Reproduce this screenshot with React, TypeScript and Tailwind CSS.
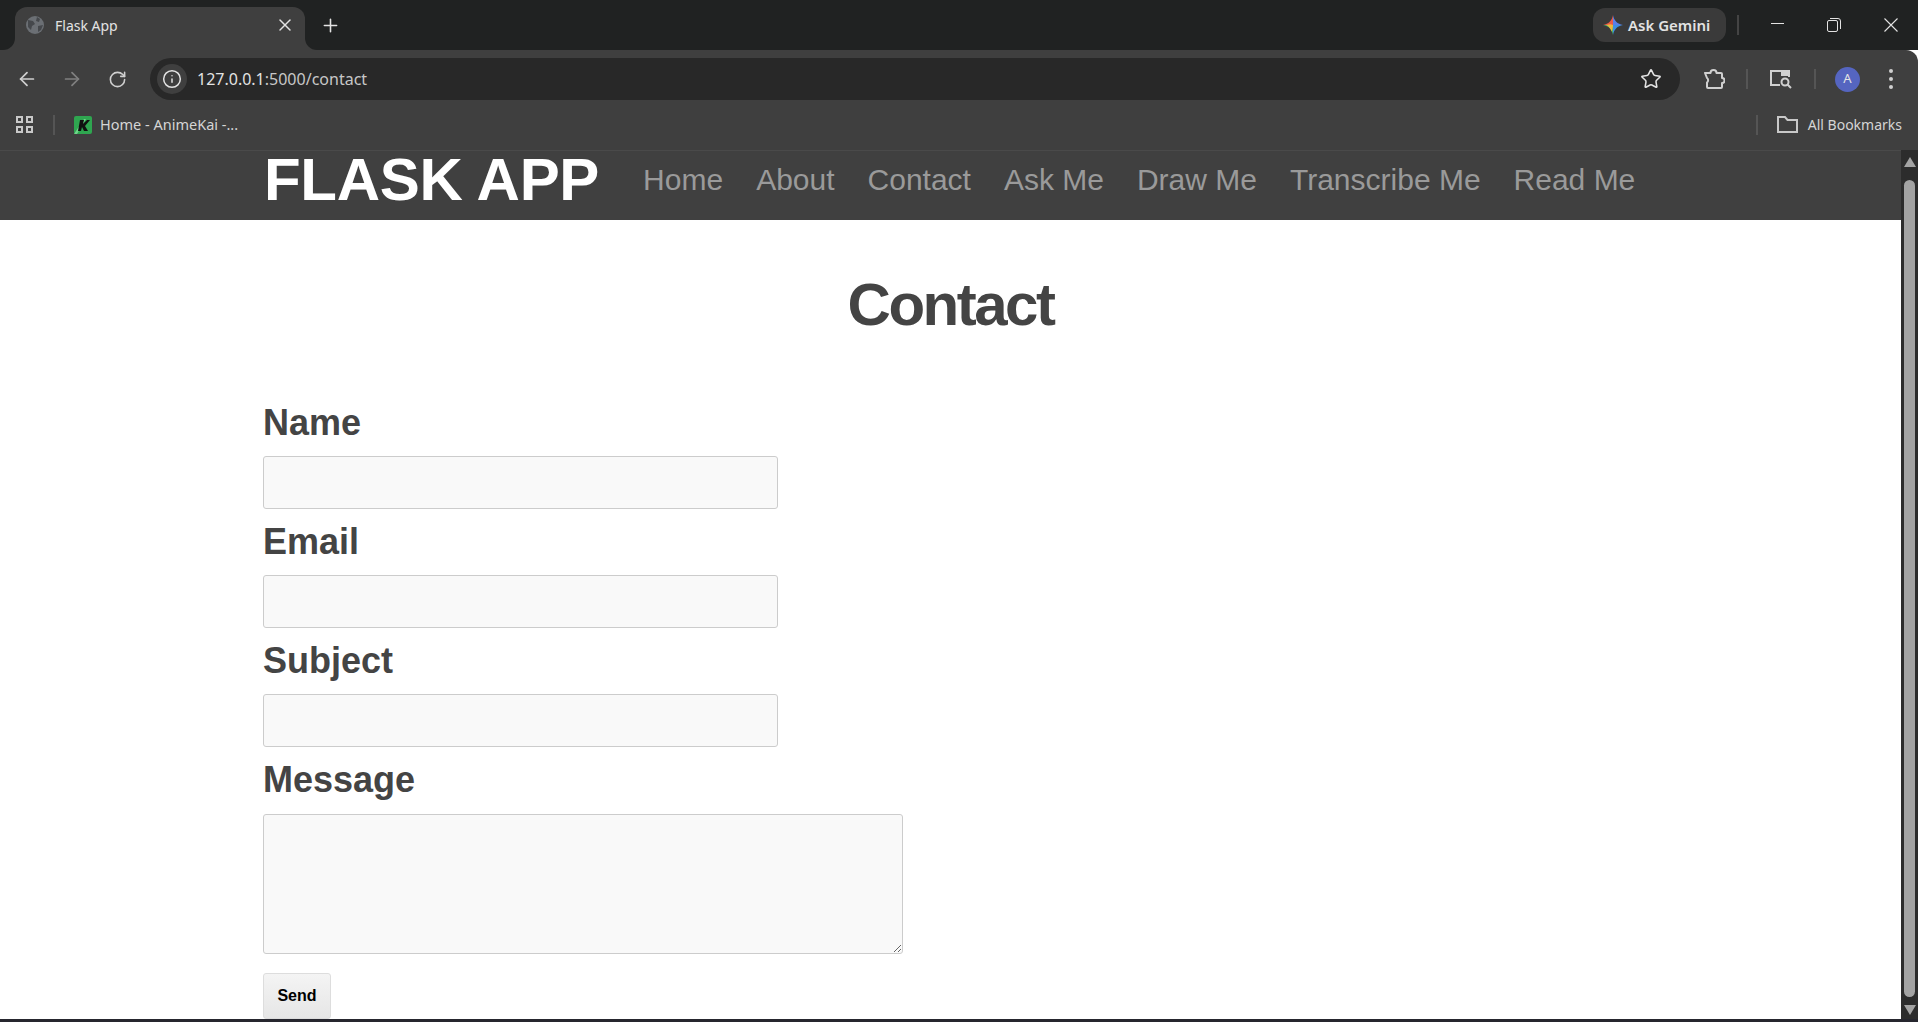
import { ArrowLeft, ArrowRight, RotateCw, Info, Star, Plus, X } from 'lucide-react'

const navLinks = ['Home', 'About', 'Contact', 'Ask Me', 'Draw Me', 'Transcribe Me', 'Read Me']

const ChromeBar = () => (
  <div className="font-['Noto_Sans',sans-serif] text-[#e3e3e3]">
    <div className="h-[50px] bg-[#202222] flex items-end">
      <div className="relative ml-[15px] w-[290px] h-[43px] bg-[#3f3f3f] rounded-t-[12px] flex items-center pl-[11px] pr-[10px] pb-[7px]">
        <div className="absolute left-[-15px] bottom-0 w-[15px] h-[15px] bg-[#3f3f3f]">
          <div className="w-full h-full bg-[#202222] rounded-br-[12px]" />
        </div>
        <div className="absolute right-[-15px] bottom-0 w-[15px] h-[15px] bg-[#3f3f3f]">
          <div className="w-full h-full bg-[#202222] rounded-bl-[12px]" />
        </div>
        <svg width="18" height="18" viewBox="0 0 18 18">
          <circle cx="9" cy="9" r="9" fill="#6b6f74" />
          <path d="M2 4l5 1 2 3-3 2-1 4-3-3zM11 1l3 2-1 3-3-1zM12 10l5-1-2 5-3 2z" fill="#45484c" />
        </svg>
        <span className="ml-[11px] text-[14px] flex-1">Flask App</span>
        <X size={20} strokeWidth={1.8} />
      </div>
      <div className="ml-[15px] mb-[14px]">
        <Plus size={21} strokeWidth={1.8} />
      </div>
      <div className="ml-auto flex items-center mb-[8px]">
        <div className="w-[133px] h-[34px] bg-[#3a3a3a] rounded-[12px] flex items-center pl-[10px] gap-[5px]">
          <svg width="20" height="20" viewBox="0 0 18 18">
            <path d="M9 0c.8 5 4 8.200 9 9H9z" fill="#5b7fe8" />
            <path d="M18 9c-5 .8-8.200 4-9 9V9z" fill="#3f8fe0" />
            <path d="M9 18c-.8-5-4-8.200-9-9h9z" fill="#45b36b" />
            <path d="M0 9c5-.8 8.200-4 9-9v9z" fill="#ea5a48" />
            <path d="M3 9c2-.5 4-1 6 0 0 2-.5 4.500-1 6-1-2.500-2.500-4.500-5-6z" fill="#f0b63c" />
          </svg>
          <span className="text-[15px] font-semibold">Ask Gemini</span>
        </div>
        <div className="ml-[11px] w-[2px] h-[20px] bg-[#444]" />
        <div className="ml-[32px] mb-[4px] w-[13px] h-[1px] bg-[#e3e3e3]" />
        <svg className="ml-[43px]" width="14" height="14" viewBox="0 0 14 14" fill="none" stroke="#e3e3e3">
          <rect x="0.500" y="2.500" width="10" height="11" rx="1.500" />
          <path d="M3 .5h8a2.500 2.500 0 0 1 2.500 2.500v8" />
        </svg>
        <svg className="ml-[43px] mr-[20px]" width="14" height="14" viewBox="0 0 14 14" fill="none" stroke="#e3e3e3" strokeWidth="1.100">
          <path d="M.5.5l13 13M13.500.5l-13 13" />
        </svg>
      </div>
    </div>

    <div className="h-[58px] bg-[#3f3f3f] rounded-tr-[12px] flex items-center">
      <ArrowLeft className="ml-[16px] text-[#d0d0d0]" size={22} strokeWidth={1.9} />
      <ArrowRight className="ml-[23px] text-[#808080]" size={22} strokeWidth={1.9} />
      <RotateCw className="ml-[25px] text-[#d0d0d0]" size={19} strokeWidth={2} />
      <div className="ml-[23px] w-[1530px] h-[42px] bg-[#282828] rounded-full flex items-center pl-[7px] pr-[18px]">
        <div className="w-[30px] h-[30px] rounded-full bg-[#3f3f3f] flex items-center justify-center">
          <Info size={20} strokeWidth={1.8} />
        </div>
        <span className="ml-[10px] text-[16px] flex-1">
          127.0.0.1<span className="text-[#c7c7c7]">:5000/contact</span>
        </span>
        <Star size={22} strokeWidth={1.7} />
      </div>
      <svg className="ml-[23px]" width="22" height="22" viewBox="0 0 22 22" fill="none" stroke="#d0d0d0" strokeWidth="2" strokeLinejoin="round">
        <path d="M2 5h5.500a3 3 0 0 1 6 0H18a1 1 0 0 1 1 1v4a2.500 2.500 0 0 1 0 5v4a1 1 0 0 1-1 1H5a1 1 0 0 1-1-1v-4.500c1.500-1 1.500-3.500 0-4.500z" />
      </svg>
      <div className="ml-[21px] w-[2px] h-[20px] bg-[#555]" />
      <svg className="ml-[22px]" width="22" height="20" viewBox="0 0 22 20" fill="none" stroke="#d0d0d0" strokeWidth="2">
        <path d="M10 16H1V2h18v6" />
        <rect x="11" y="1" width="9" height="6" fill="#d0d0d0" stroke="none" />
        <circle cx="15" cy="13" r="3.500" />
        <path d="M17.500 15.500l3.500 3.500" />
      </svg>
      <div className="ml-[22px] w-[2px] h-[20px] bg-[#555]" />
      <div className="ml-[19px] w-[25px] h-[25px] rounded-full bg-[#5565c0] flex items-center justify-center text-[13px]">A</div>
      <div className="ml-[29px] flex flex-col gap-[4px]">
        <div className="w-[4px] h-[4px] rounded-full bg-[#d0d0d0]" />
        <div className="w-[4px] h-[4px] rounded-full bg-[#d0d0d0]" />
        <div className="w-[4px] h-[4px] rounded-full bg-[#d0d0d0]" />
      </div>
    </div>

    <div className="h-[42px] pb-[9px] bg-[#3f3f3f] flex items-center">
      <div className="ml-[16px] grid grid-cols-2 gap-[3px]">
        <div className="w-[7px] h-[7px] border-2 border-[#c8c8c8]" />
        <div className="w-[7px] h-[7px] border-2 border-[#c8c8c8]" />
        <div className="w-[7px] h-[7px] border-2 border-[#c8c8c8]" />
        <div className="w-[7px] h-[7px] border-2 border-[#c8c8c8]" />
      </div>
      <div className="ml-[20px] w-[2px] h-[20px] bg-[#555]" />
      <svg className="ml-[19px]" width="18" height="18" viewBox="0 0 18 18">
        <rect width="18" height="18" rx="2" fill="#2fa650" />
        <path d="M0 18L10 3h2L3 18z" fill="#6fd48a" />
        <path d="M6 4h4l-1 4 4-4h3l-5 6 3 5h-4l-2-4-1 4H4z" fill="#111" />
      </svg>
      <span className="ml-[8px] text-[14.500px] text-[#d5d5d5]">Home - AnimeKai -...</span>
      <div className="ml-auto w-[2px] h-[20px] bg-[#555]" />
      <svg className="ml-[19px]" width="21" height="17" viewBox="0 0 21 17" fill="none" stroke="#c8c8c8" strokeWidth="2">
        <path d="M1 1h7l2.500 3H20v12H1z" />
      </svg>
      <span className="ml-[10px] mr-[16px] text-[14px] text-[#d5d5d5]">All Bookmarks</span>
    </div>
  </div>
)

const Field = ({ label }: { label: string }) => (
  <div className="mb-[8px]">
    <label className="block text-[36px] leading-[50px] font-bold text-[#444444]">{label}</label>
    <input className="block mt-[8px] w-[515px] h-[53px] bg-[#f9f9f9] border border-[#ccc] rounded-[3px]" />
  </div>
)

const Scrollbar = () => (
  <div className="w-[17px] shrink-0 bg-[#2c2c2c] flex flex-col items-center pt-[7px] pb-[4px]">
    <div className="w-0 h-0 border-x-[6px] border-x-transparent border-b-[10px] border-b-[#a3a3a3]" />
    <div className="mt-[13px] w-[11px] flex-1 rounded-full bg-[#a3a3a3]" />
    <div className="mt-[8px] w-0 h-0 border-x-[6px] border-x-transparent border-t-[10px] border-t-[#a3a3a3]" />
  </div>
)

export default function App() {
  return (
    <div className="h-[1022px] overflow-hidden flex flex-col bg-white">
      <ChromeBar />
      <div className="flex-1 min-h-0 flex font-['Liberation_Sans',sans-serif]">
        <div className="flex-1 min-w-0">
          <nav className="h-[70px] bg-[#404040] border-t border-[#4a4a4a] flex items-center pl-[264px] pb-[12px]">
            <span className="text-[60px] font-bold tracking-[-0.300px] text-white">FLASK APP</span>
            <div className="ml-[44px] flex gap-[33px] text-[30px] text-[#9a9a9a]">
              {navLinks.map((link) => (
                <a key={link}>{link}</a>
              ))}
            </div>
          </nav>
          <h1 className="mt-[50px] text-center text-[60px] leading-[70px] font-bold tracking-[-2.500px] text-[#444444]">Contact</h1>
          <form className="ml-[263px] mt-[58px]">
            <Field label="Name" />
            <Field label="Email" />
            <Field label="Subject" />
            <label className="block text-[36px] leading-[50px] font-bold text-[#444444]">Message</label>
            <textarea className="block mt-[9px] w-[640px] h-[140px] bg-[#f9f9f9] border border-[#ccc] rounded-[3px]" />
            <button className="mt-[19px] w-[68px] h-[46px] bg-gradient-to-b from-[#f4f4f4] to-[#e6e6e6] border border-[#ddd] rounded-[3px] text-[16px] font-bold text-black">
              Send
            </button>
          </form>
        </div>
        <Scrollbar />
      </div>
      <div className="h-[3px] shrink-0 bg-[#26262e]" />
    </div>
  )
}
